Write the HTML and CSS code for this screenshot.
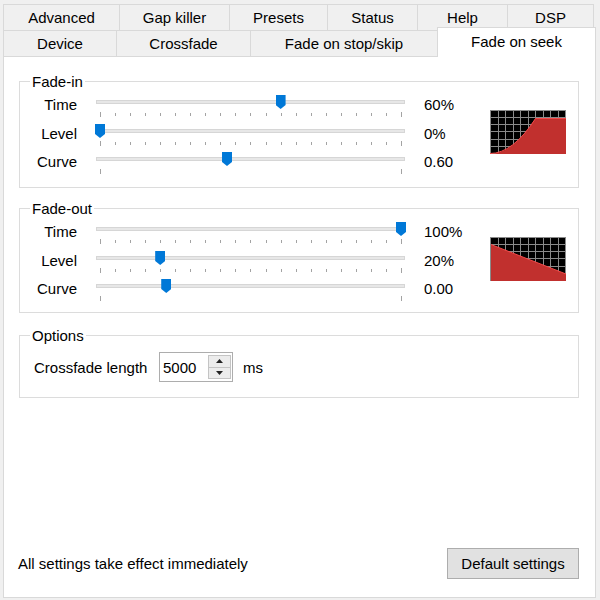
FILE: index.html
```html
<!DOCTYPE html>
<html>
<head>
<meta charset="utf-8">
<title>Fade on seek</title>
<link rel="stylesheet" href="styles.css">
</head>
<body>
<div class="window">
  <div class="tab-row row-top">
    <div class="tab t-advanced">Advanced</div>
    <div class="tab t-gap">Gap killer</div>
    <div class="tab t-presets">Presets</div>
    <div class="tab t-status">Status</div>
    <div class="tab t-help">Help</div>
    <div class="tab t-dsp">DSP</div>
  </div>
  <div class="tab-row row-bottom">
    <div class="tab t-device">Device</div>
    <div class="tab t-crossfade">Crossfade</div>
    <div class="tab t-stop">Fade on stop/skip</div>
    <div class="tab t-seek selected">Fade on seek</div>
  </div>
  <div class="panel">
    <div class="group fade-in">
      <span class="legend">Fade-in</span>
      <div class="grid">
        <svg class="graph" viewBox="0 0 76 44" width="76" height="44">
          <rect width="76" height="44" fill="#000"/>
          <path d="M0.5 0V44M8 0V44M15.5 0V44M23 0V44M30.5 0V44M38 0V44M45.5 0V44M53 0V44M60.5 0V44M68 0V44M75.5 0V44M0 0.5H76M0 7.5H76M0 14.5H76M0 21.5H76M0 29.5H76M0 36.5H76M0 43.5H76" stroke="#8a8a8a" stroke-width="1" shape-rendering="crispEdges" fill="none"/>
          <path d="M0 44Q22.8 44 45.6 8L76 8L76 44Z" fill="#c1302e"/>
          <path d="M0 43.5Q22.8 43.5 45.6 8.5L76 8.5" stroke="#f24848" stroke-width="1" fill="none"/>
        </svg>
        <span class="label">Time</span>
        <div class="slider">
          <div class="track"></div>
          <div class="ticks"><i class="tick major"></i><i class="tick"></i><i class="tick"></i><i class="tick"></i><i class="tick"></i><i class="tick"></i><i class="tick"></i><i class="tick"></i><i class="tick"></i><i class="tick"></i><i class="tick"></i><i class="tick"></i><i class="tick"></i><i class="tick"></i><i class="tick"></i><i class="tick"></i><i class="tick"></i><i class="tick"></i><i class="tick"></i><i class="tick"></i><i class="tick major"></i></div>
          <div class="thumb" style="--v:0.6"></div>
        </div>
        <span class="value">60%</span>
        <span class="label">Level</span>
        <div class="slider">
          <div class="track"></div>
          <div class="ticks"><i class="tick major"></i><i class="tick"></i><i class="tick"></i><i class="tick"></i><i class="tick"></i><i class="tick"></i><i class="tick"></i><i class="tick"></i><i class="tick"></i><i class="tick"></i><i class="tick"></i><i class="tick"></i><i class="tick"></i><i class="tick"></i><i class="tick"></i><i class="tick"></i><i class="tick"></i><i class="tick"></i><i class="tick"></i><i class="tick"></i><i class="tick major"></i></div>
          <div class="thumb" style="--v:0"></div>
        </div>
        <span class="value">0%</span>
        <span class="label">Curve</span>
        <div class="slider">
          <div class="track"></div>
          <div class="ticks"><i class="tick major"></i><i class="tick major"></i></div>
          <div class="thumb" style="--v:0.422"></div>
        </div>
        <span class="value">0.60</span>
      </div>
    </div>

    <div class="group fade-out">
      <span class="legend">Fade-out</span>
      <div class="grid">
        <svg class="graph" viewBox="0 0 76 44" width="76" height="44">
          <rect width="76" height="44" fill="#000"/>
          <path d="M0.5 0V44M8 0V44M15.5 0V44M23 0V44M30.5 0V44M38 0V44M45.5 0V44M53 0V44M60.5 0V44M68 0V44M75.5 0V44M0 0.5H76M0 7.5H76M0 14.5H76M0 21.5H76M0 29.5H76M0 36.5H76M0 43.5H76" stroke="#8a8a8a" stroke-width="1" shape-rendering="crispEdges" fill="none"/>
          <path d="M1 7.5L76 37L76 44L1 44Z" fill="#c1302e"/>
          <path d="M1 7.5L76 37" stroke="#f24848" stroke-width="1" fill="none"/>
        </svg>
        <span class="label">Time</span>
        <div class="slider">
          <div class="track"></div>
          <div class="ticks"><i class="tick major"></i><i class="tick"></i><i class="tick"></i><i class="tick"></i><i class="tick"></i><i class="tick"></i><i class="tick"></i><i class="tick"></i><i class="tick"></i><i class="tick"></i><i class="tick"></i><i class="tick"></i><i class="tick"></i><i class="tick"></i><i class="tick"></i><i class="tick"></i><i class="tick"></i><i class="tick"></i><i class="tick"></i><i class="tick"></i><i class="tick major"></i></div>
          <div class="thumb" style="--v:1"></div>
        </div>
        <span class="value">100%</span>
        <span class="label">Level</span>
        <div class="slider">
          <div class="track"></div>
          <div class="ticks"><i class="tick major"></i><i class="tick"></i><i class="tick"></i><i class="tick"></i><i class="tick"></i><i class="tick"></i><i class="tick"></i><i class="tick"></i><i class="tick"></i><i class="tick"></i><i class="tick"></i><i class="tick"></i><i class="tick"></i><i class="tick"></i><i class="tick"></i><i class="tick"></i><i class="tick"></i><i class="tick"></i><i class="tick"></i><i class="tick"></i><i class="tick major"></i></div>
          <div class="thumb" style="--v:0.2"></div>
        </div>
        <span class="value">20%</span>
        <span class="label">Curve</span>
        <div class="slider">
          <div class="track"></div>
          <div class="ticks"><i class="tick major"></i><i class="tick major"></i></div>
          <div class="thumb" style="--v:0.22"></div>
        </div>
        <span class="value">0.00</span>
      </div>
    </div>

    <div class="group options">
      <span class="legend">Options</span>
      <div class="options-row">
        <span class="opt-label">Crossfade length</span>
        <div class="spin">
          <span class="spin-value">5000</span>
          <div class="spin-btns">
            <div class="spin-btn"><svg width="7" height="4" viewBox="0 0 7 4"><path d="M3.5 0L7 4H0Z" fill="#222"/></svg></div>
            <div class="spin-btn"><svg width="7" height="4" viewBox="0 0 7 4"><path d="M0 0H7L3.5 4Z" fill="#222"/></svg></div>
          </div>
        </div>
        <span class="unit">ms</span>
      </div>
    </div>

    <div class="footer">
      <span class="note">All settings take effect immediately</span>
      <button class="btn">Default settings</button>
    </div>
  </div>
</div>
</body>
</html>
```

FILE: styles.css
```css
* { box-sizing: border-box; }
html, body { margin: 0; padding: 0; }
body {
  background: #f0f0f0;
  font-family: "Liberation Sans", Arial, sans-serif;
  font-size: 15px;
  color: #000;
  width: 600px;
  height: 600px;
  overflow: hidden;
}
.window { padding: 4px 0 0 3px; }

.tab-row { display: flex; height: 26px; }
.row-bottom { position: relative; z-index: 1; }
.tab {
  height: 26px;
  border: 1px solid #d9d9d9;
  border-bottom: none;
  background: #f0f0f0;
  display: flex;
  align-items: center;
  justify-content: center;
  margin-left: -1px;
  white-space: nowrap;
}
.tab:first-child { margin-left: 0; }
.t-advanced { width: 117px; }
.t-gap { width: 111px; }
.t-presets { width: 99px; }
.t-status { width: 91px; }
.t-help { width: 91px; }
.t-dsp { width: 87px; }
.t-device { width: 114px; }
.t-crossfade { width: 135px; }
.t-stop { width: 188px; }
.t-seek { width: 159px; }
.tab.selected {
  position: relative;
  z-index: 2;
  background: #fff;
  height: 30px;
  margin-top: -3px;
  padding-bottom: 2px;
}

.panel {
  position: relative;
  z-index: 0;
  width: 593px;
  height: 542px;
  border: 1px solid #d9d9d9;
  background: #fff;
  padding: 24px 16px 18px 15px;
  display: flex;
  flex-direction: column;
}

.group {
  position: relative;
  border: 1px solid #dcdcdc;
}
.fade-in { height: 107px; }
.fade-out { height: 105px; margin-top: 20px; }
.options { height: 63px; margin-top: 22px; }
.legend {
  position: absolute;
  top: -9px;
  left: 10px;
  padding: 0 2px;
  background: #fff;
  line-height: 17px;
}

.grid {
  display: grid;
  grid-template-columns: 57px 309px 47px 76px;
  grid-template-rows: 29px 28px 29px;
  column-gap: 19px;
  padding-top: 10px;
}
.label { text-align: right; line-height: 26px; }
.value { line-height: 26px; }
.graph {
  grid-column: 4;
  grid-row: 1 / span 3;
  margin-top: 18px;
  display: block;
}

.slider { position: relative; }
.track {
  margin-top: 8px;
  height: 4px;
  background: #e7e7e7;
  border: 1px solid #d6d6d6;
}
.ticks {
  display: flex;
  justify-content: space-between;
  align-items: flex-start;
  margin: 8px 3px 0 4px;
}
.tick {
  display: block;
  width: 1px;
  height: 3px;
  margin-top: 1px;
  background: #a3a3a3;
}
.tick.major { height: 5px; margin-top: 0; }
.thumb {
  position: absolute;
  top: 3px;
  left: calc(var(--v) * 301px - 1px);
  width: 10px;
  height: 14px;
  background: #0078d7;
  clip-path: polygon(0 0, 100% 0, 100% 72%, 50% 100%, 0 72%);
}

.options-row {
  display: flex;
  align-items: center;
  padding: 16px 0 0 14px;
}
.opt-label { width: 125px; }
.spin {
  width: 74px;
  height: 30px;
  border: 1px solid #adadad;
  display: flex;
  align-items: stretch;
  justify-content: space-between;
  padding: 2px 1px 2px 3px;
}
.spin-value { align-self: center; }
.spin-btns {
  width: 23px;
  display: flex;
  flex-direction: column;
  border: 1px solid #c4c4c4;
}
.spin-btn {
  flex: 1;
  background: #ececec;
  display: flex;
  align-items: center;
  justify-content: center;
}
.spin-btn + .spin-btn { border-top: 1px solid #c4c4c4; }
.spin-btn svg { display: block; }
.unit { margin-left: 10px; }

.footer {
  margin-top: auto;
  display: flex;
  justify-content: space-between;
  align-items: center;
}
.note { margin-left: -1px; }
.btn {
  width: 132px;
  height: 31px;
  border: 1px solid #adadad;
  background: #e1e1e1;
  font: inherit;
  color: #000;
  padding: 0;
}
```
